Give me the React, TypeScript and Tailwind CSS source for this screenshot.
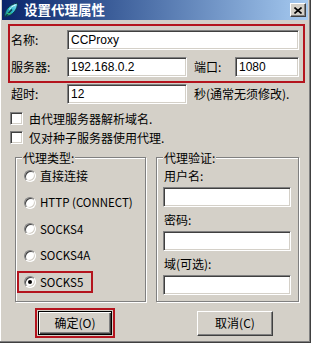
import React from 'react';

const sunken =
  'bg-white border border-t-[#808080] border-l-[#808080] border-r-white border-b-white shadow-[inset_1px_1px_0_#404040,inset_-1px_-1px_0_#d4d0c8]';

const latin = { fontFamily: '"Liberation Sans", "Noto Sans CJK SC", sans-serif' };

function Field({ w, value }: { w: string; value?: string }) {
  return (
    <div className={`${w} h-[20px] ${sunken} flex items-center px-[3px] text-[12px] text-black`} style={latin}>
      {value}
    </div>
  );
}

function Checkbox({ label }: { label: string }) {
  return (
    <div className="flex items-center h-[13px] pl-[10px]">
      <div className={`w-[13px] h-[13px] ${sunken}`} />
      <span className="ml-[6px] text-[12px] leading-none">{label}</span>
    </div>
  );
}

function Radio({ label, checked, latinText }: { label: string; checked?: boolean; latinText?: boolean }) {
  return (
    <div className="flex items-center">
      <div className="w-[12px] h-[12px] rounded-full bg-white border border-t-[#808080] border-l-[#808080] border-r-white border-b-white shadow-[inset_1px_1px_0_#404040,inset_-1px_-1px_0_#d4d0c8] flex items-center justify-center">
        {checked && <div className="w-[4px] h-[4px] rounded-full bg-black" />}
      </div>
      <span className={`ml-[4px] leading-none ${latinText ? 'text-[11.5px]' : 'text-[12px]'}`}>{label}</span>
    </div>
  );
}

function GroupBox({ title, className, children }: { title: string; className: string; children: React.ReactNode }) {
  return (
    <div
      className={`relative h-[145px] border border-[#808080] shadow-[inset_1px_1px_0_white,1px_1px_0_white] ${className}`}
    >
      <span className="absolute left-[6px] top-[-8px] bg-[#d4d0c8] px-px text-[12px] leading-[16px]">{title}</span>
      {children}
    </div>
  );
}

function TitleIcon() {
  return (
    <svg width="16" height="16" viewBox="0 0 16 16">
      <defs>
        <linearGradient id="leaf" x1="0" y1="1" x2="1" y2="0">
          <stop offset="0" stopColor="#1b7f8c" />
          <stop offset="0.5" stopColor="#2bb8c8" />
          <stop offset="1" stopColor="#8fe6ff" />
        </linearGradient>
      </defs>
      <path d="M1.5 15 C1.5 9 5.5 2.5 14.5 1 C14.5 7.5 10 13.5 2.5 14.5 Z" fill="url(#leaf)" stroke="#0d3a4a" strokeWidth="1" />
      <path d="M2.5 14.5 L9 7.5" stroke="#0d3a4a" strokeWidth="1.3" />
      <path d="M4 11 C5 12 7 12 8 11" stroke="#36c070" strokeWidth="1.4" fill="none" />
      <path d="M6.5 7.5 C7.5 5.5 9.5 3.8 12.5 3" stroke="#e6fff8" strokeWidth="1" fill="none" />
    </svg>
  );
}

export default function App() {
  return (
    <div
      className="w-[311px] h-[343px] bg-[#d4d0c8] flex flex-col text-black shadow-[inset_-1px_-1px_0_#404040,inset_-2px_-2px_0_#808080,inset_1px_0_0_white]"
      style={{ fontFamily: '"Noto Sans CJK SC", "Liberation Sans", sans-serif' }}
    >
      {/* title bar */}
      <div className="ml-[2px] mr-[3px] h-[20px] flex items-center bg-gradient-to-r from-[#0a246a] to-[#a6caf0]">
        <div className="ml-px">
          <TitleIcon />
        </div>
        <span className="ml-[5px] text-[13.5px] font-bold text-white leading-none">设置代理属性</span>
        <div className="ml-auto mr-[2px] w-[16px] h-[14px] bg-[#d4d0c8] border border-t-white border-l-white border-r-[#404040] border-b-[#404040] shadow-[inset_-1px_-1px_0_#808080] flex items-center justify-center">
          <svg width="8" height="7" viewBox="0 0 8 7">
            <path d="M0.5 0.5 L7.5 6.5 M7.5 0.5 L0.5 6.5" stroke="black" strokeWidth="1.6" />
          </svg>
        </div>
      </div>

      {/* name / server */}
      <div className="mt-[4px] ml-[8px] w-[297px] h-[59px] border-2 border-[#b4141e] pl-px pt-[4px]">
        <div className="flex items-center">
          <span className="w-[56px] text-[12px]">名称:</span>
          <Field w="w-[232px]" value="CCProxy" />
        </div>
        <div className="flex items-center mt-[7px]">
          <span className="w-[56px] text-[12px]">服务器:</span>
          <Field w="w-[120px]" value="192.168.0.2" />
          <span className="ml-[7px] w-[41px] text-[12px]">端口:</span>
          <Field w="w-[64px]" value="1080" />
        </div>
      </div>

      {/* timeout */}
      <div className="flex items-center mt-px pl-[11px]">
        <span className="w-[56px] text-[12px]">超时:</span>
        <Field w="w-[120px]" value="12" />
        <span className="ml-[7px] text-[12px]">秒(通常无须修改).</span>
      </div>

      <div className="mt-[8px]">
        <Checkbox label="由代理服务器解析域名." />
      </div>
      <div className="mt-[6px]">
        <Checkbox label="仅对种子服务器使用代理." />
      </div>

      {/* groups */}
      <div className="flex mt-[13px]">
        <GroupBox title="代理类型:" className="ml-[15px] w-[131px]">
          <div className="flex flex-col pt-[5px]">
            <div className="h-[26.5px] flex items-center pl-[8px]">
              <Radio label="直接连接" />
            </div>
            <div className="h-[26.5px] flex items-center pl-[8px]">
              <Radio label="HTTP (CONNECT)" latinText />
            </div>
            <div className="h-[26.5px] flex items-center pl-[8px]">
              <Radio label="SOCKS4" latinText />
            </div>
            <div className="h-[26.5px] flex items-center pl-[8px]">
              <Radio label="SOCKS4A" latinText />
            </div>
            <div className="h-[26.5px] flex items-center pl-px">
              <div className="w-[76px] h-[22px] border-2 border-[#b4141e] flex items-center pl-[5px]">
                <Radio label="SOCKS5" checked latinText />
              </div>
            </div>
          </div>
        </GroupBox>

        <GroupBox title="代理验证:" className="ml-[10px] w-[143px]">
          <div className="flex flex-col pt-[10px] pl-[6px]">
            <span className="h-[16px] pl-px text-[12px] leading-[16px]">用户名:</span>
            <div className="mt-[3px]">
              <Field w="w-[128px]" />
            </div>
            <span className="mt-[5px] h-[16px] pl-px text-[12px] leading-[16px]">密码:</span>
            <div className="mt-[3px]">
              <Field w="w-[128px]" />
            </div>
            <span className="mt-[5px] h-[16px] pl-px text-[12px] leading-[16px]">域(可选):</span>
            <div className="mt-[3px]">
              <Field w="w-[128px]" />
            </div>
          </div>
        </GroupBox>
      </div>

      {/* buttons */}
      <div className="flex items-center mt-[6px] ml-[35px]">
        <div className="w-[80px] h-[30px] border-2 border-[#b4141e] p-px">
          <div className="w-full h-full border border-black shadow-[inset_1px_1px_0_white,inset_-1px_-1px_0_#404040,inset_-2px_-2px_0_#808080] flex items-center justify-center text-[12px]">
            确定(O)
          </div>
        </div>
        <div className="ml-[82px] w-[76px] h-[25px] border border-t-white border-l-white border-r-[#404040] border-b-[#404040] shadow-[inset_-1px_-1px_0_#808080] flex items-center justify-center text-[12px]">
          取消(C)
        </div>
      </div>
    </div>
  );
}
